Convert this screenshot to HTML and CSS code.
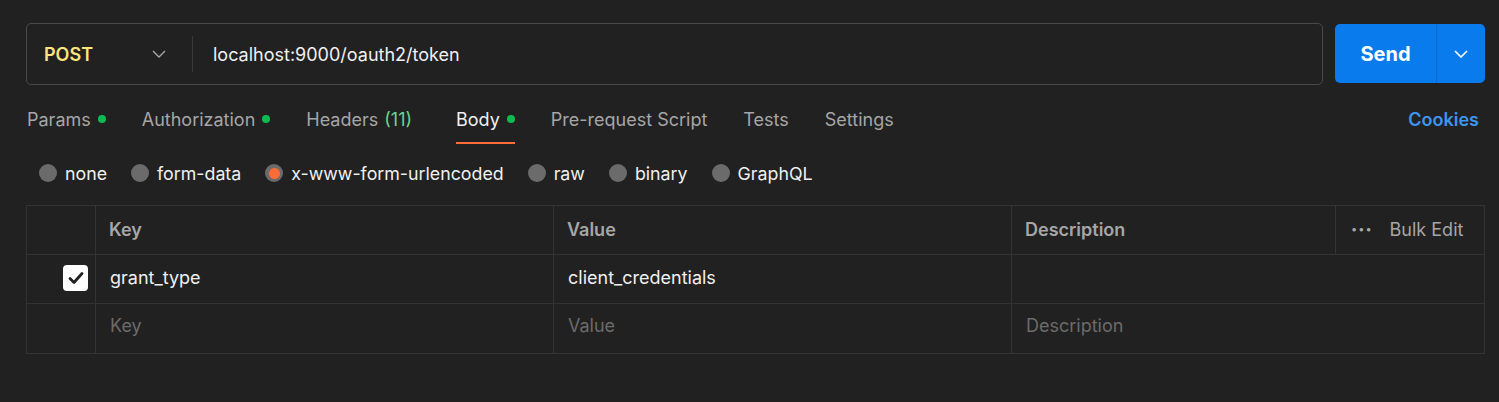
FILE: index.html
```html
<!DOCTYPE html>
<html>
<head>
<meta charset="utf-8">
<link rel="stylesheet" href="styles.css">
</head>
<body>
<div class="page">
  <div class="topbar">
    <div class="urlbar">
      <div class="method">
        <span class="method-name">POST</span>
        <svg class="chev" width="14" height="8" viewBox="0 0 14 8"><path d="M1 1l6 6 6-6" fill="none" stroke="#a6a6a6" stroke-width="1.4"/></svg>
      </div>
      <div class="url">localhost:9000/oauth2/token</div>
    </div>
    <div class="send">
      <div class="send-label">Send</div>
      <div class="send-drop"><svg width="14" height="8" viewBox="0 0 14 8"><path d="M1 1l6 6 6-6" fill="none" stroke="#fff" stroke-width="1.6"/></svg></div>
    </div>
  </div>

  <div class="tabs">
    <div class="tab">Params<span class="dot"></span></div>
    <div class="tab">Authorization<span class="dot"></span></div>
    <div class="tab">Headers <span class="count">(11)</span></div>
    <div class="tab active">Body<span class="dot"></span></div>
    <div class="tab">Pre-request Script</div>
    <div class="tab">Tests</div>
    <div class="tab">Settings</div>
    <div class="spacer"></div>
    <div class="cookies">Cookies</div>
  </div>

  <div class="radios">
    <div class="radio"><span class="circle"></span>none</div>
    <div class="radio"><span class="circle"></span>form-data</div>
    <div class="radio"><span class="circle on"></span>x-www-form-urlencoded</div>
    <div class="radio"><span class="circle"></span>raw</div>
    <div class="radio"><span class="circle"></span>binary</div>
    <div class="radio"><span class="circle"></span>GraphQL</div>
  </div>

  <div class="table">
    <div class="row head">
      <div class="cell c-check"></div>
      <div class="cell c-key">Key</div>
      <div class="cell c-val">Value</div>
      <div class="cell c-desc">Description</div>
      <div class="cell c-bulk"><span class="dots">•••</span><span>Bulk Edit</span></div>
    </div>
    <div class="row data">
      <div class="cell c-check"><span class="checkbox"><svg width="16" height="14" viewBox="0 0 16 14"><path d="M2 7.5l4 4 8-9" fill="none" stroke="#212121" stroke-width="2.8" stroke-linecap="round" stroke-linejoin="round"/></svg></span></div>
      <div class="cell c-key val-text">grant_type</div>
      <div class="cell c-val val-text">client_credentials</div>
      <div class="cell c-rest"></div>
    </div>
    <div class="row data last">
      <div class="cell c-check"></div>
      <div class="cell c-key ph">Key</div>
      <div class="cell c-val ph">Value</div>
      <div class="cell c-rest ph">Description</div>
    </div>
  </div>
</div>
</body>
</html>
```

FILE: styles.css
```css
* { box-sizing: border-box; }
html, body { margin: 0; padding: 0; background: #212121; }
body { font-family: Inter, "Noto Sans", sans-serif; color: #f0f0f0; width: 1499px; height: 402px; overflow: hidden; }
.page { padding: 23px 14px 0 26px; }

.topbar { display: flex; gap: 12px; height: 62px; }
.urlbar { flex: 1; display: flex; align-items: center; border: 1px solid #4a4a4a; border-radius: 5px; }
.method { width: 166px; display: flex; align-items: center; justify-content: space-between; padding: 0 26px 0 17px; height: 36px; border-right: 1px solid #3a3a3a; }
.method-name { color: #ffe47e; font-weight: 600; font-size: 18px; }
.url { padding-left: 20px; font-size: 18px; color: #f0f0f0; }
.send { width: 150px; display: flex; background: #097bed; border-radius: 5px; margin-top: 1px; height: 59px; }
.send-label { width: 102px; display: flex; align-items: center; justify-content: center; font-weight: 700; font-size: 20px; color: #fff; border-right: 1px solid #0a6ad0; }
.send-drop { flex: 1; display: flex; align-items: center; justify-content: center; }

.tabs { display: flex; align-items: stretch; height: 60px; }
.tab { display: flex; align-items: center; font-size: 18px; color: #a6a6a6; margin-right: 36px; position: relative; padding-top: 8px; }
.tab:first-child { margin-left: 1px; }
.tab.active { color: #f0f0f0; }
.tab.active::after { content: ""; position: absolute; left: 0; right: 0; bottom: 1px; height: 2px; background: #ff6c37; }
.dot { width: 8px; height: 8px; border-radius: 50%; background: #0cbb52; margin-left: 7px; }
.count { color: #6bd48f; margin-left: 6px; margin-right: 8px; }
.spacer { flex: 1; }
.cookies { display: flex; align-items: center; padding-top: 8px; color: #3d95ef; font-weight: 600; font-size: 18px; margin-right: 6px; }

.radios { display: flex; align-items: center; height: 60px; padding: 0 0 4px 13px; }
.radio { display: flex; align-items: center; font-size: 17.8px; color: #f0f0f0; margin-right: 24px; }
.circle { width: 18px; height: 18px; border-radius: 50%; background: #6b6b6b; margin-right: 8px; display: flex; align-items: center; justify-content: center; }
.circle.on::after { content: ""; width: 11px; height: 11px; border-radius: 50%; background: #ff6c37; }

.table { border: 1px solid #333; }
.row { display: flex; height: 49px; border-bottom: 1px solid #333; }
.row.last { border-bottom: none; height: 49px; }
.cell { display: flex; align-items: center; font-size: 18px; border-right: 1px solid #333; padding-bottom: 2px; }
.data .cell { padding-bottom: 4px; }
.last .cell { padding-bottom: 6px; }
.data .c-check { padding-bottom: 2px; }
.c-check { width: 69px; justify-content: flex-end; padding-right: 6px; }
.c-key { width: 458px; padding-left: 13px; }
.c-val { width: 458px; padding-left: 13px; }
.c-desc { width: 324px; padding-left: 13px; }
.c-bulk { flex: 1; border-right: none; padding-left: 15px; color: #a6a6a6; gap: 17px; }
.c-rest { flex: 1; border-right: none; padding-left: 14px; }
.head .cell { color: #a6a6a6; font-weight: 600; }
.head .c-bulk { font-weight: 400; }
.dots { font-size: 11px; letter-spacing: 1px; }
.val-text { color: #f0f0f0; padding-left: 14px; }
.ph { color: #6b6b6b; padding-left: 14px; }
.checkbox { width: 25px; height: 26px; background: #fff; border-radius: 4px; display: flex; align-items: center; justify-content: center; margin-right: 1px; }
```
